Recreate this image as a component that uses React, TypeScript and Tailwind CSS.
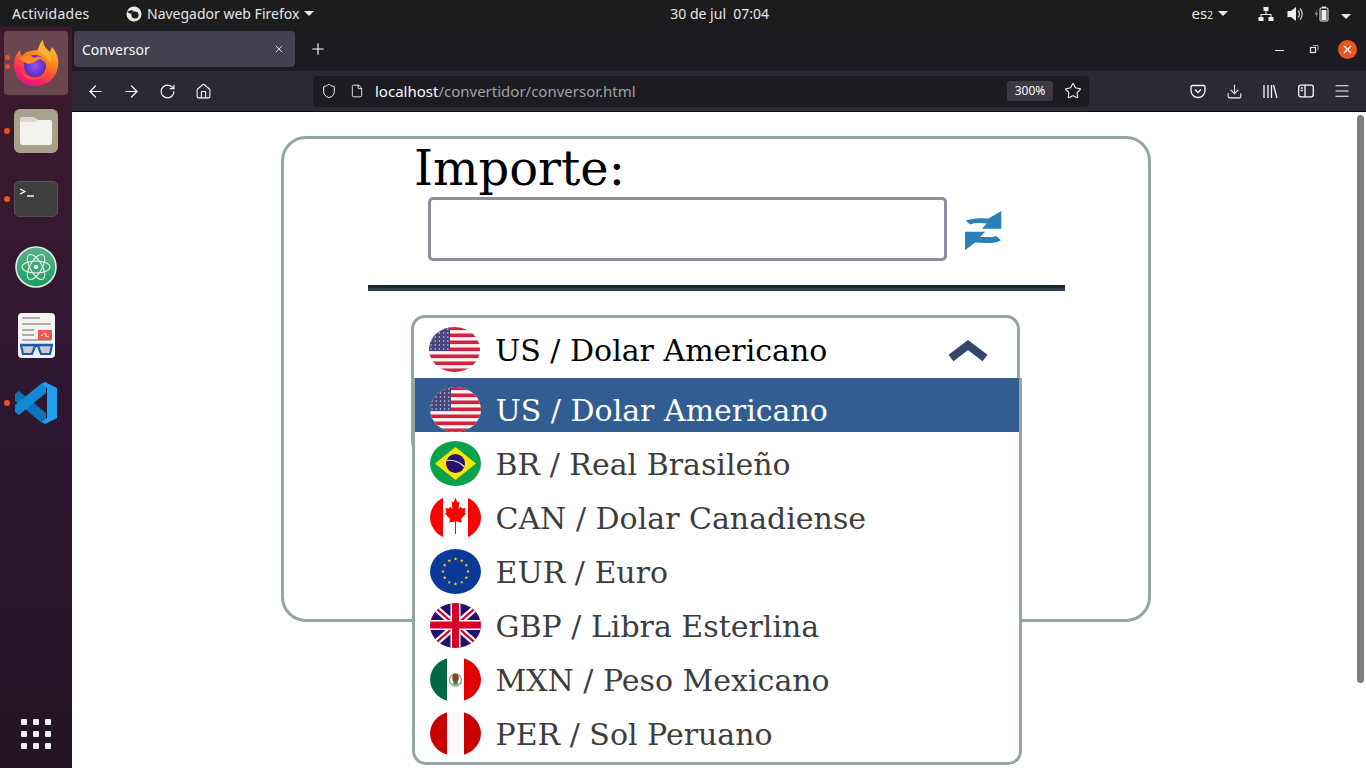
import { ArrowLeft, ArrowRight, RotateCw, Home, Shield, File, Star, Download, Menu, X, Plus } from "lucide-react";
import type { ReactNode } from "react";

const CHROME_FONT = "font-['Noto_Sans',sans-serif]";
const SERIF_FONT = "font-['DejaVu_Serif',serif]";

function FlagFrame({ children }: { children: ReactNode }) {
  return (
    <svg width={51} height={45} viewBox="0 0 51 45" className="shrink-0 rounded-[50%]">
      {children}
    </svg>
  );
}

function FlagUS() {
  const stripes = [0, 1, 2, 3, 4, 5, 6];
  const stars = Array.from({ length: 30 });
  return (
    <FlagFrame>
      <rect width={51} height={45} fill="#f4f4f4" />
      {stripes.map((i) => (
        <rect key={i} y={i * 7 - 0.5} width={51} height={3.6} fill="#d3213f" />
      ))}
      <rect width={21} height={24} fill="#46467f" />
      {stars.map((_, i) => (
        <circle key={i} cx={2 + (i % 5) * 4.2} cy={2 + Math.floor(i / 5) * 4} r={0.8} fill="#d6d6e6" />
      ))}
    </FlagFrame>
  );
}

function FlagBR() {
  return (
    <FlagFrame>
      <rect width={51} height={45} fill="#0ba24a" />
      <polygon points="5,22.5 25.5,6 46,22.5 25.5,39" fill="#fde500" />
      <circle cx={25.5} cy={22.5} r={9.5} fill="#27136e" />
      <path d="M16.5 19.5 Q27 18 34.5 26" stroke="#c9e6d6" strokeWidth={1.2} fill="none" />
    </FlagFrame>
  );
}

function FlagCA() {
  return (
    <FlagFrame>
      <rect width={51} height={45} fill="#fff" />
      <rect width={13} height={45} fill="#f00" />
      <rect x={38} width={13} height={45} fill="#f00" />
      <path
        d="M25.5 3 L27.6 7.5 L29.4 6.5 L28.6 14 L31 11.5 L31.8 13.5 L35.6 13 L34.6 17.5 L36 18.5 L31 24 L31.8 27.5 L26 26.5 L26 39 L25 39 L25 26.5 L19.2 27.5 L20 24 L15 18.5 L16.4 17.5 L15.4 13 L19.2 13.5 L20 11.5 L22.4 14 L21.6 6.5 L23.4 7.5 Z"
        fill="#f00"
      />
    </FlagFrame>
  );
}

function starPoints(cx: number, cy: number, r: number) {
  return Array.from({ length: 10 })
    .map((_, i) => {
      const a = -Math.PI / 2 + (i * Math.PI) / 5;
      const d = i % 2 === 0 ? r : r * 0.42;
      return `${cx + Math.cos(a) * d},${cy + Math.sin(a) * d}`;
    })
    .join(" ");
}

function FlagEU() {
  return (
    <FlagFrame>
      <rect width={51} height={45} fill="#0b3a96" />
      {Array.from({ length: 12 }).map((_, i) => {
        const a = (i / 12) * Math.PI * 2;
        return <polygon key={i} points={starPoints(25.5 + Math.cos(a) * 12.5, 22.5 + Math.sin(a) * 12.5, 1.9)} fill="#f7d117" />;
      })}
    </FlagFrame>
  );
}

function FlagGB() {
  return (
    <FlagFrame>
      <rect width={51} height={45} fill="#25106e" />
      <path d="M0 0 L51 45 M51 0 L0 45" stroke="#fff" strokeWidth={6.5} />
      <path d="M0 0 L51 45 M51 0 L0 45" stroke="#d80027" strokeWidth={2.2} />
      <rect x={20.5} width={10} height={45} fill="#fff" />
      <rect y={17} width={51} height={10} fill="#fff" />
      <rect x={22} width={7} height={45} fill="#d80027" />
      <rect y={18.5} width={51} height={7} fill="#d80027" />
    </FlagFrame>
  );
}

function FlagMX() {
  return (
    <FlagFrame>
      <rect width={51} height={45} fill="#fff" />
      <rect width={17} height={45} fill="#006847" />
      <rect x={34} width={17} height={45} fill="#e00000" />
      <circle cx={25.5} cy={23} r={6} fill="none" stroke="#8aa98a" strokeWidth={1.4} />
      <ellipse cx={25.5} cy={21} rx={3.2} ry={4.6} fill="#7a4a22" />
      <ellipse cx={25.5} cy={26.5} rx={3} ry={1.4} fill="#3b8f6b" />
    </FlagFrame>
  );
}

function FlagPE() {
  return (
    <FlagFrame>
      <rect width={51} height={45} fill="#fafafa" />
      <rect width={17} height={45} fill="#c80000" />
      <rect x={34} width={17} height={45} fill="#c80000" />
    </FlagFrame>
  );
}

const CURRENCIES = [
  { label: "US / Dolar Americano", flag: <FlagUS /> },
  { label: "BR / Real Brasileño", flag: <FlagBR /> },
  { label: "CAN / Dolar Canadiense", flag: <FlagCA /> },
  { label: "EUR / Euro", flag: <FlagEU /> },
  { label: "GBP / Libra Esterlina", flag: <FlagGB /> },
  { label: "MXN / Peso Mexicano", flag: <FlagMX /> },
  { label: "PER / Sol Peruano", flag: <FlagPE /> },
];

function FirefoxLogo() {
  return (
    <svg width={46} height={46} viewBox="0 0 46 46">
      <defs>
        <linearGradient id="ffBody" x1="0.8" y1="0" x2="0.3" y2="1">
          <stop offset="0" stopColor="#ffd43a" />
          <stop offset="0.45" stopColor="#ff7a1f" />
          <stop offset="0.8" stopColor="#f5245f" />
          <stop offset="1" stopColor="#e31587" />
        </linearGradient>
        <radialGradient id="ffGlobe">
          <stop offset="0" stopColor="#9059ff" />
          <stop offset="1" stopColor="#5b2bb0" />
        </radialGradient>
      </defs>
      <path
        d="M30 0 C30 6 33 8 37 12 C38 9 39 8 39 7 C44 13 46 19 45 26 C44 38 34 46 22 46 C10 46 1 37 1 25 C1 19 3 14 7 10 C7 13 8 15 9 16 C13 10 20 11 25 10 C26 6 27 3 30 0 Z"
        fill="url(#ffBody)"
      />
      <circle cx={22} cy={26} r={11} fill="url(#ffGlobe)" />
      <path
        d="M6 18 C11 15 18 15 21 18 C26 14 32 18 32 24 C30 19 26 18 23 21 C20 24 14 25 12 22 C10 21 8 20 6 18 Z"
        fill="#ff8a24"
      />
      <path d="M30 0 C30 6 33 9 36 14 C38 18 38 20 38 23 C34 16 27 13 25 10 C26 6 27 3 30 0 Z" fill="#ffb52e" />
      <path d="M7 28 C9 38 18 42 26 39 C30 38 33 35 34 32 C30 36 24 39 18 37 C12 35 9 32 7 28 Z" fill="#ff5634" opacity={0.75} />
    </svg>
  );
}

function FilesIcon() {
  return (
    <div className="flex h-[44px] w-[44px] items-center justify-center rounded-[6px] bg-[#a8a28c]">
      <svg width={34} height={30} viewBox="0 0 34 30">
        <path d="M1 4 Q1 1 4 1 L14 1 L19 4 L31 4 Q33 4 33 7 L33 26 Q33 29 30 29 L4 29 Q1 29 1 26 Z" fill="#f4f2ee" />
        <path d="M1 6 L15 6 L19 4 L14 1 L4 1 Q1 1 1 4 Z" fill="#dcd8cf" />
      </svg>
    </div>
  );
}

function TerminalIcon() {
  return (
    <div className="h-[36px] w-[44px] rounded-[5px] border border-[#555] bg-[#3e3e3e]">
      <svg width={42} height={34} viewBox="0 0 42 34">
        <path d="M5 7 L10 9.5 L5 12" stroke="#fff" strokeWidth={1.2} fill="none" />
        <path d="M12 14 L19 14" stroke="#fff" strokeWidth={1.4} />
      </svg>
    </div>
  );
}

function AtomIcon() {
  return (
    <svg width={42} height={42} viewBox="0 0 42 42">
      <defs>
        <linearGradient id="atomBg" x1="0" y1="0" x2="0" y2="1">
          <stop offset="0" stopColor="#58b48c" />
          <stop offset="1" stopColor="#1f9c62" />
        </linearGradient>
      </defs>
      <circle cx={21} cy={21} r={20} fill="url(#atomBg)" stroke="#e6ece8" strokeWidth={1.6} />
      <g fill="none" stroke="#eef6f0" strokeWidth={1.1}>
        <ellipse cx={21} cy={21} rx={14} ry={6} />
        <ellipse cx={21} cy={21} rx={14} ry={6} transform="rotate(60 21 21)" />
        <ellipse cx={21} cy={21} rx={14} ry={6} transform="rotate(120 21 21)" />
      </g>
      <circle cx={21} cy={21} r={2.2} fill="#eef6f0" />
    </svg>
  );
}

function ReaderIcon() {
  return (
    <svg width={37} height={45} viewBox="0 0 37 45">
      <rect width={37} height={45} rx={4} fill="#f3f3f3" />
      <g fill="#b3aea2">
        <rect x={4} y={4} width={18} height={2} />
        <rect x={4} y={10} width={29} height={2} />
        <rect x={4} y={16} width={12} height={2} />
        <rect x={4} y={21} width={12} height={2} />
        <rect x={4} y={26} width={29} height={2} />
      </g>
      <rect x={20} y={17} width={14} height={10} fill="#ee5552" />
      <path d="M23 23 Q28 18 28 22 Q27 25 31 23" stroke="#fff" strokeWidth={1} fill="none" />
      <path d="M3 32 L5 41 L14 41 L17 33 L20 33 L23 41 L32 41 L34 32" fill="#c8cdd2" stroke="#1e5aa8" strokeWidth={2.2} />
      <path d="M2 32 L35 32" stroke="#1e5aa8" strokeWidth={2.4} />
    </svg>
  );
}

function VSCodeIcon() {
  return (
    <svg width={44} height={42} viewBox="0 0 44 42">
      <path d="M1 12 L5 9 L32 31 L32 41 L28 41 L1 19 Z" fill="#0e72b8" />
      <path d="M1 30 L5 33 L32 11 L32 1 L28 1 L1 23 Z" fill="#1288d2" />
      <path d="M31 0 L43 6 L43 36 L31 42 L28 40 L33 36 L33 6 L28 2 Z" fill="#21a0ef" />
    </svg>
  );
}

function Caret() {
  return <span className="ml-[5px] inline-block border-x-[5px] border-t-[5px] border-x-transparent border-t-[#e8e8e8]" />;
}

function TopBar() {
  return (
    <header className={`flex h-[27px] shrink-0 items-center bg-[#1c1c1c] text-[14px] text-[#e4e6e8] ${CHROME_FONT}`}>
      <span className="ml-[12px] w-[113px] tracking-[0.25px]">Actividades</span>
      <svg width={18} height={18} viewBox="0 0 18 18" className="mr-[4px]">
        <circle cx={9} cy={9} r={7.5} fill="#e8e8e8" />
        <circle cx={10} cy={10} r={3.6} fill="#1c1c1c" />
        <path d="M2 7 Q6 4 9 6 L6 9 Z" fill="#1c1c1c" />
      </svg>
      <span>Navegador web Firefox</span>
      <Caret />
      <span className="ml-[356px] whitespace-pre">30 de jul  07:04</span>
      <div className="ml-auto flex items-center pr-[15px]">
        <span className="text-[15px]">
          es<span className="text-[10px]">2</span>
        </span>
        <Caret />
        <svg width={16} height={16} viewBox="0 0 16 16" className="ml-[30px]" fill="#eee">
          <rect x={5.5} y={1} width={5} height={4} />
          <rect x={0.5} y={11} width={5} height={4} />
          <rect x={10.5} y={11} width={5} height={4} />
          <path d="M7.5 5h1v3h5v3h-1V9H3.5v2h-1V8h5z" />
        </svg>
        <svg width={18} height={16} viewBox="0 0 18 16" className="ml-[13px]">
          <path d="M0.5 5h3.5l5-4v14l-5-4H0.5z" fill="#eee" />
          <path d="M11 4.5a5 5 0 0 1 0 7M13 2.5a8 8 0 0 1 0 11" stroke="#ccc" strokeWidth={1.2} fill="none" />
        </svg>
        <svg width={16} height={16} viewBox="0 0 16 16" className="ml-[9px]">
          <path d="M2 8 L0.5 9 L3 3 L2.5 7 H4 L2 12 Z" fill="#888" />
          <rect x={6} y={2} width={8} height={13} rx={1} fill="none" stroke="#eee" strokeWidth={1} />
          <rect x={7.5} y={4} width={5} height={10} fill="#eee" />
          <rect x={8} y={0.5} width={4} height={1.5} fill="#eee" />
        </svg>
        <span className="ml-[6px]">
          <Caret />
        </span>
      </div>
    </header>
  );
}

function Dock() {
  return (
    <aside className="flex w-[72px] shrink-0 flex-col items-center bg-gradient-to-b from-[#3f1a2c] via-[#2e1630] to-[#231523]">
      <div className="relative mt-[4px] flex h-[64px] w-[64px] items-center justify-center rounded-[4px] bg-[#6a4750]">
        <FirefoxLogo />
        <span className="absolute left-[1px] top-[24px] h-[5px] w-[5px] rounded-full bg-[#e95420]" />
        <span className="absolute left-[1px] top-[33px] h-[5px] w-[5px] rounded-full bg-[#e95420]" />
      </div>
      <div className="mt-[2px] flex w-full flex-col">
        {[
          { icon: <FilesIcon />, dot: true },
          { icon: <TerminalIcon />, dot: true },
          { icon: <AtomIcon />, dot: false },
          { icon: <ReaderIcon />, dot: false },
          { icon: <VSCodeIcon />, dot: true },
        ].map((app, i) => (
          <div key={i} className="relative flex h-[68px] w-full items-center justify-center">
            {app.icon}
            {app.dot && <span className="absolute left-[4px] top-[31px] h-[6px] w-[6px] rounded-full bg-[#e95420]" />}
          </div>
        ))}
      </div>
      <div className="mb-[19px] mt-auto grid grid-cols-3 gap-[6px]">
        {Array.from({ length: 9 }).map((_, i) => (
          <span key={i} className="h-[6px] w-[6px] rounded-[1px] bg-[#eeeeee]" />
        ))}
      </div>
    </aside>
  );
}

function PocketIcon() {
  return (
    <svg width={16} height={16} viewBox="0 0 16 16" fill="none" stroke="#fbfbfe" strokeWidth={1.3}>
      <path d="M2.5 2.5h11A1.5 1.5 0 0 1 15 4v3.5a7 7 0 0 1-14 0V4a1.5 1.5 0 0 1 1.5-1.5z" />
      <path d="M5 6.5l3 3 3-3" />
    </svg>
  );
}

function LibraryIcon() {
  return (
    <svg width={16} height={16} viewBox="0 0 16 16" stroke="#fbfbfe" strokeWidth={1.3} fill="none">
      <path d="M2 2v13M6 2v13M9.5 2v13M11.5 2l3.5 13" />
    </svg>
  );
}

function SidebarIcon() {
  return (
    <svg width={16} height={16} viewBox="0 0 16 16" stroke="#fbfbfe" strokeWidth={1.3} fill="none">
      <rect x={0.7} y={2.2} width={14.6} height={11.6} rx={2} />
      <path d="M7 2.2v11.6M2.8 5h2M2.8 7.5h2" />
    </svg>
  );
}

function ToolSlot({ children }: { children: ReactNode }) {
  return <span className="flex w-[36px] items-center justify-center">{children}</span>;
}

function BrowserChrome() {
  return (
    <div className={`shrink-0 ${CHROME_FONT}`}>
      <div className="flex h-[44px] items-center bg-[#1c1b22]">
        <div className="ml-[2px] flex h-[36px] w-[221px] items-center justify-between rounded-[4px] bg-[#42414d] pl-[8px] pr-[10px] text-[14px] text-[#fbfbfe]">
          <span className="pt-[1px]">Conversor</span>
          <X size={12} strokeWidth={1.6} />
        </div>
        <Plus size={18} strokeWidth={1.5} color="#fbfbfe" className="ml-[14px]" />
        <div className="ml-auto flex items-center">
          <span className="mt-[3px] h-[1px] w-[9px] bg-[#e8e8ea]" />
          <svg width={10} height={10} viewBox="0 0 10 10" fill="none" stroke="#e8e8ea" className="ml-[25px]">
            <rect x={1.5} y={3.5} width={5} height={5} strokeWidth={1.2} />
            <path d="M4 1.5h5v5" strokeWidth={0.7} />
          </svg>
          <span className="ml-[19px] mr-[9px] flex h-[19px] w-[19px] items-center justify-center rounded-full bg-[#e95420]">
            <X size={13} strokeWidth={2.2} color="#fff" />
          </span>
        </div>
      </div>
      <div className="flex h-[41px] items-center border-b border-b-[#0c0c0d] bg-[#2b2a33] text-[#fbfbfe]">
        <div className="ml-[5px] flex">
          <ToolSlot><ArrowLeft size={19} strokeWidth={1.5} /></ToolSlot>
          <ToolSlot><ArrowRight size={19} strokeWidth={1.5} /></ToolSlot>
          <ToolSlot><RotateCw size={17} strokeWidth={1.6} /></ToolSlot>
          <ToolSlot><Home size={17} strokeWidth={1.5} /></ToolSlot>
        </div>
        <div className="ml-[92px] flex h-[31px] w-[776px] items-center rounded-[4px] bg-[#1c1b22] pl-[8px] text-[15px]">
          <Shield size={16} strokeWidth={1.5} />
          <File size={14} strokeWidth={1.5} className="ml-[13px]" />
          <span className="ml-[11px]">localhost</span>
          <span className="text-[#a1a1a6]">/convertidor/conversor.html</span>
          <span className="ml-auto flex h-[20px] w-[46px] items-center justify-center rounded-[3px] bg-[#3a3944] text-[12px]">
            300%
          </span>
          <Star size={18} strokeWidth={1.4} className="ml-[11px] mr-[7px]" />
        </div>
        <div className="ml-[91px] flex items-center">
          <ToolSlot><PocketIcon /></ToolSlot>
          <ToolSlot><Download size={17} strokeWidth={1.5} /></ToolSlot>
          <ToolSlot><LibraryIcon /></ToolSlot>
          <ToolSlot><SidebarIcon /></ToolSlot>
          <ToolSlot><Menu size={18} strokeWidth={1.5} /></ToolSlot>
        </div>
      </div>
    </div>
  );
}

function SwapIcon() {
  return (
    <svg width={37} height={41} viewBox="195 60 110 122" fill="#2a80b9">
      <path d="M197 92 Q215 82 265 85 L303 63 L303 116 L245 116 L260 100 Q225 97 210 103 Z" />
      <path d="M195 125 L255 125 L240 140 Q275 142 288 137 L302 150 Q285 162 225 157 L195 180 Z" />
    </svg>
  );
}

function CurrencySelect() {
  return (
    <div className="relative ml-[127px] mt-[24px] h-[140px] w-[609px] rounded-[14px] border-[3px] border-[#95a5a6] bg-white">
      <div className="flex items-start pl-[15px] pt-[9px]">
        <FlagUS />
        <span className="ml-[15px] text-[30px] leading-[47px] text-black">US / Dolar Americano</span>
        <svg width={40} height={36} viewBox="0 0 40 36" className="ml-auto mr-[29px]">
          <path d="M3 31 L20 18 L37 31" stroke="#34466b" strokeWidth={8} fill="none" />
        </svg>
      </div>
      <ul className="absolute left-[-2px] top-[60px] w-[610px] rounded-b-[14px] border-b-[3px] border-l-[3px] border-r-[3px] border-[#95a5a6] bg-white pb-[6px]">
        {CURRENCIES.map((c, i) => (
          <li
            key={c.label}
            className={`flex h-[54px] items-start pl-[15px] pt-[9px] ${i === 0 ? "bg-[#315d92] text-white" : "text-[#3d3d3d]"}`}
          >
            {c.flag}
            <span className="ml-[14.5px] text-[30px] leading-[47px]">{c.label}</span>
          </li>
        ))}
      </ul>
    </div>
  );
}

export default function App() {
  return (
    <div className="flex h-[768px] w-[1366px] flex-col overflow-hidden bg-white">
      <TopBar />
      <div className="flex min-h-0 flex-1">
        <Dock />
        <div className="flex min-w-0 flex-1 flex-col">
          <BrowserChrome />
          <main className={`flex min-h-0 flex-1 bg-white ${SERIF_FONT}`}>
            <div className="flex-1">
              <section className="ml-[209px] mt-[24px] h-[486px] w-[870px] rounded-[25px] border-[3px] border-[#95a5a6]">
                <h1 className="ml-[130px] h-[58px] text-[48px] leading-[58px] text-black">Importe:</h1>
                <div className="ml-[144px] flex items-center">
                  <div className="h-[64px] w-[519px] rounded-[5px] border-[3px] border-[#8f8d9d]" />
                  <span className="ml-[18px] pt-[2px]">
                    <SwapIcon />
                  </span>
                </div>
                <div className="ml-[84px] mt-[24px] h-[6px] w-[697px] border-t-[3px] border-t-[#1b2631] bg-[#2c3e50]" />
                <CurrencySelect />
              </section>
            </div>
            <div className="w-[12px] shrink-0 pl-[3px] pt-[3px]">
              <div className="h-[568px] w-[7px] rounded-full bg-[#7f7f7f]" />
            </div>
          </main>
        </div>
      </div>
    </div>
  );
}
